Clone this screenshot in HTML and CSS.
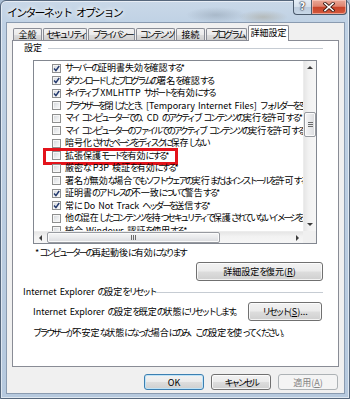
FILE: index.html
```html
<!DOCTYPE html>
<html lang="ja">
<head>
<meta charset="utf-8">
<title>インターネット オプション</title>
<link rel="stylesheet" href="styles.css">
</head>
<body>
<div class="window">
  <div class="titlebar">
    <span class="title"><span class="k">インターネット</span> <span class="k">オプション</span></span>
    <div class="caption-btns">
      <div class="cap help">?</div>
      <div class="cap close">
        <svg width="12" height="10" viewBox="0 0 12 10"><path d="M2 1.5 10 8.5M10 1.5 2 8.5" stroke="#3a1a14" stroke-width="3.2" stroke-linecap="square"/><path d="M2 1.5 10 8.5M10 1.5 2 8.5" stroke="#fff" stroke-width="1.6" stroke-linecap="square"/></svg>
      </div>
    </div>
  </div>
  <div class="client">
    <div class="tabs">
      <div class="tab tab-general">全般</div>
      <div class="tab tab-security"><span class="k">セキュリティ</span></div>
      <div class="tab tab-privacy"><span class="k">プライバシー</span></div>
      <div class="tab tab-content"><span class="k">コンテンツ</span></div>
      <div class="tab tab-connect">接続</div>
      <div class="tab tab-programs"><span class="k">プログラム</span></div>
      <div class="tab tab-advanced active">詳細設定</div>
    </div>
    <div class="panel">
      <div class="group-label"><span>設定</span><div class="rule"></div></div>
      <div class="listbox">
        <div class="list">
          <div class="item"><span class="cb on"><svg viewBox="0 0 7 7"><path d="M1 3.6 2.9 5.6 6.2 1"/></svg></span><span><span class="k">サーバーの</span>証明書失効<span class="k">を</span>確認<span class="k">する</span>*</span></div>
          <div class="item"><span class="cb on"><svg viewBox="0 0 7 7"><path d="M1 3.6 2.9 5.6 6.2 1"/></svg></span><span><span class="k">ダウンロードしたプログラムの</span>署名<span class="k">を</span>確認<span class="k">する</span></span></div>
          <div class="item"><span class="cb on"><svg viewBox="0 0 7 7"><path d="M1 3.6 2.9 5.6 6.2 1"/></svg></span><span><span class="k">ネイティブ</span> XMLHTTP <span class="k">サポートを</span>有効<span class="k">にする</span></span></div>
          <div class="item"><span class="cb"></span><span><span class="k">ブラウザーを</span>閉<span class="k">じたとき、</span>[Temporary Internet Files] <span class="k">フォルダーを</span>空<span class="k">にする</span></span></div>
          <div class="item"><span class="cb"></span><span><span class="k">マイ</span> <span class="k">コンピューターでの、</span>CD <span class="k">のアクティブ</span> <span class="k">コンテンツの</span>実行<span class="k">を</span>許可<span class="k">する</span>*</span></div>
          <div class="item"><span class="cb"></span><span><span class="k">マイ</span> <span class="k">コンピューターのファイルでのアクティブ</span> <span class="k">コンテンツの</span>実行<span class="k">を</span>許可<span class="k">する</span>*</span></div>
          <div class="item"><span class="cb"></span><span>暗号化<span class="k">されたページをディスクに</span>保存<span class="k">しない</span></span></div>
          <div class="item"><span class="cb"></span><span>拡張保護<span class="k">モードを</span>有効<span class="k">にする</span>*</span><span class="highlight"></span></div>
          <div class="item"><span class="cb"></span><span>厳密<span class="k">な</span> P3P 検証<span class="k">を</span>有効<span class="k">にする</span>*</span></div>
          <div class="item"><span class="cb"></span><span>署名<span class="k">が</span>無効<span class="k">な</span>場合<span class="k">でもソフトウェアの</span>実行<span class="k">またはインストールを</span>許可<span class="k">する</span></span></div>
          <div class="item"><span class="cb on"><svg viewBox="0 0 7 7"><path d="M1 3.6 2.9 5.6 6.2 1"/></svg></span><span>証明書<span class="k">のアドレスの</span>不一致<span class="k">について</span>警告<span class="k">する</span>*</span></div>
          <div class="item"><span class="cb on"><svg viewBox="0 0 7 7"><path d="M1 3.6 2.9 5.6 6.2 1"/></svg></span><span>常<span class="k">に</span> Do Not Track <span class="k">ヘッダーを</span>送信<span class="k">する</span>*</span></div>
          <div class="item"><span class="cb"></span><span>他<span class="k">の</span>混在<span class="k">したコンテンツを</span>持<span class="k">つセキュリティで</span>保護<span class="k">されていないイメージをブロックする</span></span></div>
          <div class="item"><span class="cb"></span><span>統合 Windows 認証<span class="k">を</span>使用<span class="k">する</span>*</span></div>
        </div>
        <div class="vscroll">
          <div class="sb-btn"><span class="arr up"></span></div>
          <div class="vtrack"><div class="vthumb"><span class="vgrip"></span></div></div>
          <div class="sb-btn"><span class="arr down"></span></div>
        </div>
        <div class="hscroll">
          <div class="sb-btn h"><span class="arr left"></span></div>
          <div class="htrack"><div class="hthumb"><span class="hgrip"></span></div></div>
          <div class="sb-btn h"><span class="arr right"></span></div>
        </div>
        <div class="corner"></div>
      </div>
      <div class="note">*<span class="k">コンピューターの</span>再起動後<span class="k">に</span>有効<span class="k">になります</span></div>
      <button class="btn restore">詳細設定<span class="k">を</span>復元(<u>R</u>)</button>
      <div class="group-label reset-label"><span>Internet Explorer <span class="k">の</span>設定<span class="k">をリセット</span></span><div class="rule"></div></div>
      <div class="reset-row">
        <span>Internet Explorer <span class="k">の</span>設定<span class="k">を</span>既定<span class="k">の</span>状態<span class="k">にリセットします。</span></span>
        <button class="btn reset"><span class="k">リセット</span>(<u>S</u>)...</button>
      </div>
      <div class="warn"><span class="k">ブラウザーが</span>不安定<span class="k">な</span>状態<span class="k">になった</span>場合<span class="k">にのみ、この</span>設定<span class="k">を</span>使<span class="k">ってください。</span></div>
    </div>
    <div class="dialog-btns">
      <button class="btn dlg default">OK</button>
      <button class="btn dlg"><span class="k">キャンセル</span></button>
      <button class="btn dlg disabled">適用(<u>A</u>)</button>
    </div>
  </div>
</div>
</body>
</html>
```
FILE: styles.css
```css
* { box-sizing: border-box; }
html, body { margin: 0; padding: 0; }
body {
  width: 350px;
  height: 399px;
  overflow: hidden;
  background: #a9bdd3;
  font-family: "Noto Sans CJK JP", "Noto Sans", sans-serif;
  font-size: 9px;
  word-spacing: 1px;
  color: #000;
}
.k { letter-spacing: -2.4px; }
.window {
  width: 350px;
  height: 399px;
  border: 1px solid #56677c;
  border-radius: 6px 6px 0 0;
  background:
    radial-gradient(ellipse 30px 8px at 215px 14px, rgba(120,135,150,0.35), transparent),
    radial-gradient(ellipse 25px 7px at 262px 16px, rgba(150,130,90,0.3), transparent),
    linear-gradient(180deg, #c9d8e8 0px, #bfd1e4 24px, #b6c9de 100%);
  box-shadow: inset 0 0 0 1px rgba(255,255,255,0.55);
  padding: 0 5px 5px 6px;
  display: flex;
  flex-direction: column;
}
.titlebar {
  height: 22px;
  flex: none;
  display: flex;
  justify-content: space-between;
  align-items: flex-start;
}
.title {
  font-size: 11px;
  line-height: 12px;
  margin-top: 5px;
  color: #000;
  word-spacing: 2px;
  text-shadow: 0 0 4px #fff, 0 0 6px #fff;
}
.title .k { letter-spacing: -1.8px; }
.caption-btns {
  display: flex;
  margin-top: -1px;
  margin-right: -3px;
}
.cap {
  height: 15px;
  border: 1px solid #4b5a6c;
  border-top: none;
  display: flex;
  align-items: center;
  justify-content: center;
}
.help {
  width: 18px;
  border-radius: 0 0 0 4px;
  border-right: none;
  background: linear-gradient(180deg, #e6eef6 0%, #d4e0ec 50%, #bccbdc 51%, #c8d8e8 100%);
  color: #fff;
  font-family: "DejaVu Sans", sans-serif;
  font-weight: bold;
  font-size: 10px;
  line-height: 10px;
  text-shadow: 0 0 1px #223, 0 0 1px #223, 0 0 2px #223;
}
.close {
  width: 36px;
  border-radius: 0 0 4px 0;
  background: linear-gradient(180deg, #e9a999 0%, #df8470 45%, #c84329 52%, #d45a3e 100%);
  box-shadow: inset 0 0 0 1px rgba(255,210,200,0.6);
}
.client {
  flex: 1;
  background: #f0f0f0;
  box-shadow: 0 0 0 1px #8a9bb0;
  padding: 2px 5px 3px 5px;
  display: flex;
  flex-direction: column;
}
.tabs {
  display: flex;
  align-items: flex-end;
  height: 16px;
  padding-left: 1px;
  margin-bottom: -1px;
  position: relative;
  z-index: 1;
  flex: none;
}
.tab {
  height: 12px;
  margin-bottom: 1px;
  padding: 0;
  border: 1px solid #898c95;
  border-bottom: none;
  border-radius: 2px 2px 0 0;
  background: linear-gradient(180deg, #f3f3f3 0%, #ebebeb 50%, #dddddd 51%, #cfcfcf 100%);
  line-height: 11px;
  white-space: nowrap;
  display: flex;
  justify-content: center;
}
.tab .k { letter-spacing: -2.3px; margin-right: -2px; }
.tab + .tab { margin-left: 1px; }
.tab-general { width: 29px; }
.tab-security { width: 44px; }
.tab-privacy { width: 47px; }
.tab-content { width: 39px; }
.tab-connect { width: 29px; }
.tab-programs { width: 41px; }
.tab-advanced { width: 41px; }
.tab.active {
  height: 16px;
  margin-bottom: 0;
  background: #fff;
  line-height: 14px;
  position: relative;
}
.panel {
  flex: 1;
  background: #fff;
  border: 1px solid #898c95;
  padding-top: 1px;
  display: flex;
  flex-direction: column;
}
.group-label {
  display: flex;
  align-items: center;
  height: 12px;
  line-height: 12px;
  padding: 0 15px 0 11px;
  white-space: nowrap;
}
.rule {
  flex: 1;
  height: 1px;
  background: #c6ccd3;
  margin-left: 6px;
}
.listbox {
  margin: 6px 21px 0 20px;
  height: 184px;
  border: 1px solid #828790;
  display: grid;
  grid-template-columns: 1fr 13px;
  grid-template-rows: 1fr 12px;
}
.list {
  overflow: hidden;
  padding-top: 1px;
  background: #fff;
  min-width: 0;
}
.item {
  position: relative;
  height: 12.5px;
  display: flex;
  align-items: center;
  gap: 4px;
  padding-left: 18px;
  white-space: nowrap;
  line-height: 12px;
}
.cb {
  flex: none;
  width: 9px;
  height: 9px;
  border: 1px solid #8e8f8f;
  background: linear-gradient(135deg, #d1d4d8 0%, #eceef0 60%, #f8f8f8 100%);
  box-shadow: inset 0 0 0 1px #f6f6f6;
  display: flex;
  align-items: center;
  justify-content: center;
}
.cb svg { width: 7px; height: 7px; display: block; }
.cb path { fill: none; stroke: #243a6e; stroke-width: 1.5; }
.highlight {
  position: absolute;
  left: 9px;
  top: -2px;
  width: 135px;
  height: 17px;
  border: 3px solid #e3131b;
}
.vscroll {
  display: flex;
  flex-direction: column;
  background: linear-gradient(90deg, #e6e6e6, #f2f2f2 40%, #f6f6f6);
  border-left: 1px solid #ececec;
}
.sb-btn {
  flex: none;
  height: 13px;
  display: flex;
  align-items: center;
  justify-content: center;
}
.sb-btn.h { height: auto; width: 12px; }
.arr { width: 0; height: 0; }
.arr.up { border-left: 3px solid transparent; border-right: 3px solid transparent; border-bottom: 3px solid #3c3c3c; }
.arr.down { border-left: 3px solid transparent; border-right: 3px solid transparent; border-top: 3px solid #3c3c3c; }
.arr.left { border-top: 3px solid transparent; border-bottom: 3px solid transparent; border-right: 3px solid #3c3c3c; }
.arr.right { border-top: 3px solid transparent; border-bottom: 3px solid transparent; border-left: 3px solid #3c3c3c; }
.vtrack { flex: 1; }
.vthumb {
  margin-top: 38px;
  height: 25px;
  border: 1px solid #979aa0;
  border-radius: 2px;
  background: linear-gradient(90deg, #f5f5f6 0%, #e9eaec 50%, #dadbde 100%);
  box-shadow: inset 0 0 0 1px #fbfbfb;
  display: flex;
  align-items: center;
  justify-content: center;
}
.vgrip {
  width: 5px;
  height: 5px;
  background: repeating-linear-gradient(180deg, #6b6b6b 0 1px, transparent 1px 2px);
}
.hscroll {
  display: flex;
  background: linear-gradient(180deg, #e6e6e6, #f2f2f2 40%, #f6f6f6);
  border-top: 1px solid #ececec;
}
.htrack { flex: 1; display: flex; }
.hthumb {
  margin-left: 1px;
  width: 173px;
  border: 1px solid #979aa0;
  border-radius: 2px;
  background: linear-gradient(180deg, #f5f5f6 0%, #e9eaec 50%, #dadbde 100%);
  box-shadow: inset 0 0 0 1px #fbfbfb;
  display: flex;
  align-items: center;
  justify-content: center;
}
.hgrip {
  width: 5px;
  height: 5px;
  background: repeating-linear-gradient(90deg, #6b6b6b 0 1px, transparent 1px 2px);
}
.corner { background: #f0f0f0; }
.note {
  margin: 3px 0 0 22px;
  line-height: 12px;
  white-space: nowrap;
}
.btn {
  font-family: inherit;
  font-size: 9px;
  word-spacing: inherit;
  color: #000;
  height: 19px;
  padding: 0;
  border: 1px solid #707070;
  border-radius: 3px;
  background: linear-gradient(180deg, #f2f2f2 0%, #ebebeb 48%, #dddddd 52%, #cfcfcf 100%);
  box-shadow: inset 0 0 0 1px rgba(255,255,255,0.75);
  line-height: 16px;
  white-space: nowrap;
}
.btn u { text-underline-offset: 1px; }
.restore {
  align-self: flex-end;
  width: 127px;
  margin: 3px 15px 0 0;
}
.reset-label { margin-top: 5px; padding-left: 10px; }
.reset-label .rule { margin-left: 2px; }
.reset-row {
  display: flex;
  align-items: center;
  justify-content: space-between;
  margin: 4px 16px 0 20px;
  white-space: nowrap;
}
.reset { width: 74px; }
.warn {
  margin: 6px 0 0 20px;
  line-height: 12px;
  white-space: nowrap;
}
.dialog-btns {
  flex: none;
  display: flex;
  justify-content: flex-end;
  gap: 7px;
  margin-top: 7px;
  padding-right: 1px;
}
.dlg { width: 60px; height: 16px; line-height: 13px; }
.default {
  border-color: #3c7fb1;
  box-shadow: inset 0 0 0 1px #bfe3f7;
}
.disabled {
  border-color: #adb2b5;
  background: #f4f4f4;
  box-shadow: none;
  color: #838383;
}
```
